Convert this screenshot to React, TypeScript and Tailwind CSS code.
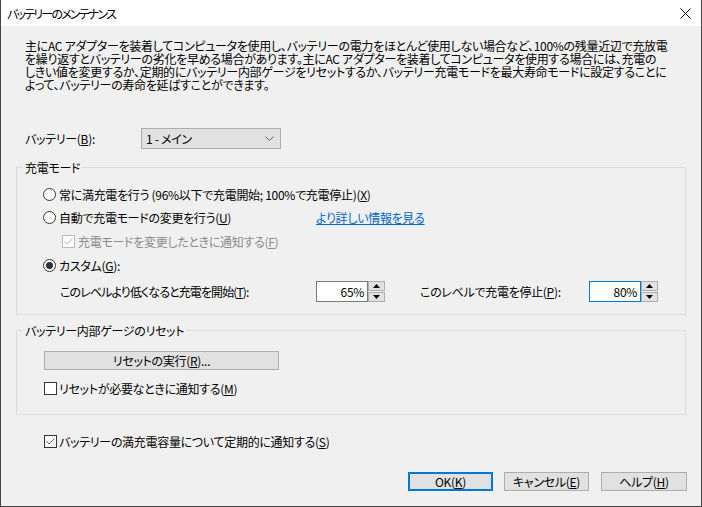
import type { ReactNode } from "react"

const U = ({ children }: { children: ReactNode }) => (
  <span className="underline decoration-1 underline-offset-[1px]">{children}</span>
)

function Radio({ checked }: { checked?: boolean }) {
  return (
    <span className="flex h-[13px] w-[13px] shrink-0 items-center justify-center rounded-full border border-[#333333] bg-white">
      {checked && <span className="h-[7px] w-[7px] rounded-full bg-[#333333]" />}
    </span>
  )
}

function Check({ checked, disabled }: { checked?: boolean; disabled?: boolean }) {
  return (
    <span
      className={
        disabled
          ? "flex h-[13px] w-[13px] shrink-0 items-center justify-center border border-[#bcbcbc] bg-white"
          : "flex h-[13px] w-[13px] shrink-0 items-center justify-center border border-[#333333] bg-white"
      }
    >
      {checked && (
        <svg width="11" height="11" viewBox="0 0 11 11">
          <path d="M1.5 5.5 L4 8 L9.5 2.5" fill="none" stroke={disabled ? "#bcbcbc" : "#666666"} strokeWidth="1" />
        </svg>
      )}
    </span>
  )
}

function Spin({ value, focused }: { value: string; focused?: boolean }) {
  return (
    <div className="flex h-[21px]">
      <div
        className={
          focused
            ? "flex w-[52px] items-center justify-end border border-[#0078d7] bg-white pr-[3px]"
            : "flex w-[52px] items-center justify-end border border-[#7a7a7a] bg-white pr-[3px]"
        }
      >
        {value}
      </div>
      <div className="flex w-[17px] flex-col gap-[1px]">
        <div className="flex h-[10px] items-center justify-center border border-[#adadad] bg-[#e1e1e1]">
          <svg width="7" height="4" viewBox="0 0 7 4">
            <polygon points="0,4 7,4 3.5,0" fill="#000" />
          </svg>
        </div>
        <div className="flex h-[10px] items-center justify-center border border-[#adadad] bg-[#e1e1e1]">
          <svg width="7" height="4" viewBox="0 0 7 4">
            <polygon points="0,0 7,0 3.5,4" fill="#000" />
          </svg>
        </div>
      </div>
    </div>
  )
}

export default function App() {
  return (
    <div className="flex h-[507px] w-[702px] flex-col border-x border-b border-[#454545] bg-[#f0f0f0] text-[12px] leading-[13px] tracking-[-0.3px] text-black [font-family:'Noto_Sans_CJK_JP',sans-serif] [font-feature-settings:'palt']">
      {/* タイトルバー */}
      <div className="flex h-[26px] shrink-0 items-center justify-between bg-white pl-[6px] pr-[10px]">
        <span className="tracking-[-1.8px]">バッテリーのメンテナンス</span>
        <svg width="11" height="11" viewBox="0 0 11 11">
          <path d="M0.5 0.5 L10.5 10.5 M10.5 0.5 L0.5 10.5" stroke="#000" strokeWidth="1" />
        </svg>
      </div>

      <div className="flex flex-1 flex-col">
        <p className="mt-[13px] whitespace-nowrap pl-[24px]">
          主にAC アダプターを装着してコンピュータを使用し、バッテリーの電力をほとんど使用しない場合など、100%の残量近辺で充放電
          <br />
          を繰り返すとバッテリーの劣化を早める場合があります。主にAC アダプターを装着してコンピュータを使用する場合には、充電の
          <br />
          しきい値を変更するか、定期的にバッテリー内部ゲージをリセットするか、バッテリー充電モードを最大寿命モードに設定することに
          <br />
          よって、バッテリーの寿命を延ばすことができます。
        </p>

        <div className="mt-[37px] flex h-[21px] items-center pl-[24px]">
          <span className="w-[116px]">
            バッテリー(<U>B</U>):
          </span>
          <div className="flex h-[21px] w-[140px] items-center justify-between border border-[#adadad] bg-[#e1e1e1] pl-[4px] pr-[6px]">
            <span>1 - メイン</span>
            <svg width="9" height="5" viewBox="0 0 9 5">
              <path d="M0.5 0.5 L4.5 4.5 L8.5 0.5" fill="none" stroke="#606060" strokeWidth="1" />
            </svg>
          </div>
        </div>

        {/* 充電モード */}
        <fieldset className="mx-[15px] mt-[12px] border border-[#dcdcdc] pb-[9px]">
          <legend className="ml-[6px] px-[2px] leading-[13px]">充電モード</legend>
          <div className="mt-[9px] flex flex-col pl-[26px]">
            <div className="flex h-[23px] items-center gap-[3px]">
              <Radio />
              <span className="whitespace-nowrap">
                常に満充電を行う (96%以下で充電開始; 100%で充電停止)(<U>X</U>)
              </span>
            </div>
            <div className="flex h-[23px] items-center">
              <div className="flex w-[273px] items-center gap-[3px]">
                <Radio />
                <span className="whitespace-nowrap">
                  自動で充電モードの変更を行う(<U>U</U>)
                </span>
              </div>
              <span className="whitespace-nowrap text-[#0066cc] underline decoration-1 underline-offset-[1px]">
                より詳しい情報を見る
              </span>
            </div>
            <div className="flex h-[25px] items-center gap-[3px] pl-[19px] text-[#8a8a8a]">
              <Check checked disabled />
              <span className="whitespace-nowrap">
                充電モードを変更したときに通知する(<U>F</U>)
              </span>
            </div>
            <div className="flex h-[23px] items-center gap-[3px]">
              <Radio checked />
              <span>
                カスタム(<U>G</U>):
              </span>
            </div>
            <div className="flex h-[28px] items-center pl-[17px]">
              <span className="w-[256px] whitespace-nowrap tracking-[-0.9px]">
                このレベルより低くなると充電を開始(<U>T</U>):
              </span>
              <Spin value="65%" />
              <span className="ml-[35px] w-[169px] whitespace-nowrap">
                このレベルで充電を停止(<U>P</U>):
              </span>
              <Spin value="80%" focused />
            </div>
          </div>
        </fieldset>

        {/* ゲージのリセット */}
        <fieldset className="mx-[15px] mt-[9px] border border-[#dcdcdc] pb-[16px]">
          <legend className="ml-[6px] px-[2px] leading-[13px]">バッテリー内部ゲージのリセット</legend>
          <div className="flex flex-col pl-[27px]">
            <button className="mt-[14px] flex h-[19px] w-[235px] items-center justify-center border border-[#adadad] bg-[#e1e1e1]">
              リセットの実行(<U>R</U>)...
            </button>
            <div className="mt-[8px] flex h-[20px] items-center gap-[2px]">
              <Check />
              <span className="whitespace-nowrap">
                リセットが必要なときに通知する(<U>M</U>)
              </span>
            </div>
          </div>
        </fieldset>

        <div className="mt-[16px] flex h-[20px] items-center gap-[2px] pl-[43px]">
          <Check checked />
          <span className="whitespace-nowrap">
            バッテリーの満充電容量について定期的に通知する(<U>S</U>)
          </span>
        </div>

        <div className="mt-[21px] flex h-[19px] justify-end pr-[14px]">
          <button className="flex w-[85px] items-center justify-center border-2 border-[#0078d7] bg-[#e1e1e1]">
            OK(<U>K</U>)
          </button>
          <button className="ml-[11px] flex w-[85px] items-center justify-center border border-[#adadad] bg-[#e1e1e1]">
            キャンセル(<U>E</U>)
          </button>
          <button className="ml-[12px] flex w-[86px] items-center justify-center border border-[#adadad] bg-[#e1e1e1]">
            ヘルプ(<U>H</U>)
          </button>
        </div>
      </div>
    </div>
  )
}
